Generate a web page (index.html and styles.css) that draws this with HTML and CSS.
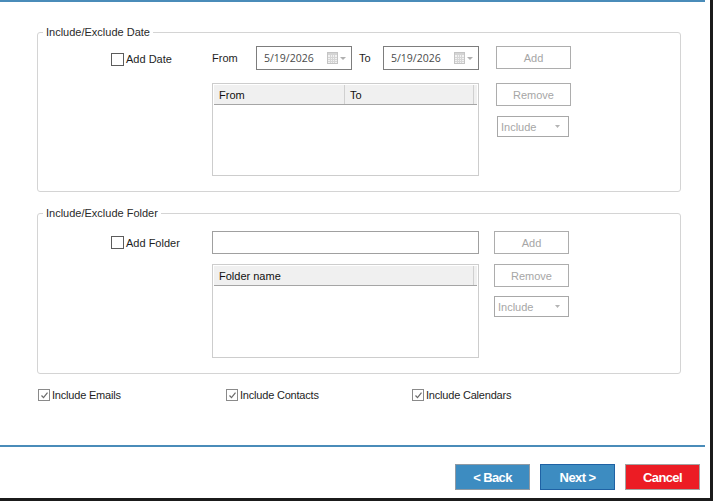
FILE: index.html
```html
<!DOCTYPE html>
<html>
<head>
<meta charset="utf-8">
<link rel="stylesheet" href="styles.css">
</head>
<body>
<div class="window">
  <div class="topline"></div>

  <fieldset class="group group-date">
    <legend>Include/Exclude Date</legend>
    <div class="grid">
      <label class="chk"><span class="box"></span>Add Date</label>
      <div class="daterow">
        <span class="lbl from">From</span>
        <div class="picker">
          <span class="val">5/19/2026</span>
          <svg class="cal" width="20" height="12" viewBox="0 0 20 12">
            <rect x="0.5" y="0.5" width="10" height="11" fill="#f2f2f2" stroke="#c4c4c4"/>
            <rect x="1" y="1" width="9" height="2" fill="#d4d4d4"/>
            <path d="M1 5.5h9M1 7.5h9M1 9.5h9M3.5 3v8M5.5 3v8M7.5 3v8" stroke="#d6d6d6" stroke-width="1"/>
            <path d="M13 5h6l-3 3z" fill="#b0b0b0"/>
          </svg>
        </div>
        <span class="lbl to">To</span>
        <div class="picker">
          <span class="val">5/19/2026</span>
          <svg class="cal" width="20" height="12" viewBox="0 0 20 12">
            <rect x="0.5" y="0.5" width="10" height="11" fill="#f2f2f2" stroke="#c4c4c4"/>
            <rect x="1" y="1" width="9" height="2" fill="#d4d4d4"/>
            <path d="M1 5.5h9M1 7.5h9M1 9.5h9M3.5 3v8M5.5 3v8M7.5 3v8" stroke="#d6d6d6" stroke-width="1"/>
            <path d="M13 5h6l-3 3z" fill="#b0b0b0"/>
          </svg>
        </div>
      </div>
      <button class="btn add">Add</button>
      <div class="list">
        <div class="lhead">
          <span class="col c-from">From</span>
          <span class="col c-to">To</span>
        </div>
      </div>
      <div class="side">
        <button class="btn">Remove</button>
        <div class="combo combo-date"><span>Include</span><svg width="5" height="3" viewBox="0 0 5 3"><path d="M0 0h5l-2.5 3z" fill="#b4b4b4"/></svg></div>
      </div>
    </div>
  </fieldset>

  <fieldset class="group group-folder">
    <legend>Include/Exclude Folder</legend>
    <div class="grid">
      <label class="chk"><span class="box"></span>Add Folder</label>
      <div class="textbox"></div>
      <button class="btn add">Add</button>
      <div class="list list2">
        <div class="lhead">
          <span class="col c-folder">Folder name</span>
        </div>
      </div>
      <div class="side">
        <button class="btn">Remove</button>
        <div class="combo"><span>Include</span><svg width="5" height="3" viewBox="0 0 5 3"><path d="M0 0h5l-2.5 3z" fill="#b4b4b4"/></svg></div>
      </div>
    </div>
  </fieldset>

  <div class="includes">
    <label class="inc w1"><span class="cbox"><svg width="9" height="9" viewBox="0 0 9 9"><path d="M1.5 4.5l2 2.2 4-5" fill="none" stroke="#6a6a6a" stroke-width="1.2"/></svg></span>Include Emails</label>
    <label class="inc w2"><span class="cbox"><svg width="9" height="9" viewBox="0 0 9 9"><path d="M1.5 4.5l2 2.2 4-5" fill="none" stroke="#6a6a6a" stroke-width="1.2"/></svg></span>Include Contacts</label>
    <label class="inc"><span class="cbox"><svg width="9" height="9" viewBox="0 0 9 9"><path d="M1.5 4.5l2 2.2 4-5" fill="none" stroke="#6a6a6a" stroke-width="1.2"/></svg></span>Include Calendars</label>
  </div>

  <footer class="footer">
    <div class="botline"></div>
    <div class="actions">
      <button class="nav back">&lt; Back</button>
      <button class="nav next">Next &gt;</button>
      <button class="nav cancel">Cancel</button>
    </div>
  </footer>
</div>
</body>
</html>
```

FILE: styles.css
```css
* { box-sizing: border-box; }
html, body { margin: 0; padding: 0; background: #fff; }
body {
  font-family: "Liberation Sans", Arial, sans-serif;
  font-size: 11px;
  color: #1a1a1a;
}
.window {
  width: 713px;
  height: 501px;
  border-right: 3px solid #1b1b1b;
  border-bottom: 3px solid #1b1b1b;
  display: flex;
  flex-direction: column;
  background: #fff;
  overflow: hidden;
}
.topline {
  width: 705px;
  height: 2px;
  background: #4a8cb9;
  flex: none;
}
.group {
  margin: 0 0 0 37px;
  width: 644px;
  padding: 0;
  border: 1px solid #d4d4d4;
  border-radius: 3px;
  min-inline-size: 0;
  flex: none;
}
.group legend {
  margin-left: 5px;
  padding: 0 3px;
  font-size: 11px;
  line-height: 13px;
  color: #2a2a2a;
}
.group-date { margin-top: 24px; }
.group-folder { margin-top: 15px; }

.grid {
  display: grid;
  padding-left: 73px;
  align-items: start;
}
.group-date .grid {
  grid-template-columns: 101px 267px 17px 75px;
  grid-template-rows: 24px auto;
  row-gap: 13px;
  padding-top: 7px;
  padding-bottom: 15px;
}
.group-folder .grid {
  grid-template-columns: 101px 267px 15px 75px;
  grid-template-rows: 23px auto;
  row-gap: 10px;
  padding-top: 11px;
  padding-bottom: 15px;
}
.chk {
  grid-column: 1;
  grid-row: 1;
  align-self: center;
  display: flex;
  align-items: center;
  color: #1e1e1e;
  font-size: 11px;
}
.group-date .chk { margin-top: 2px; }
.box {
  width: 13px;
  height: 13px;
  border: 1px solid #5c5c5c;
  background: #fff;
  margin-right: 2px;
  flex: none;
}
.daterow {
  grid-column: 2;
  grid-row: 1;
  display: flex;
  align-items: center;
  height: 24px;
}
.lbl { color: #1e1e1e; }
.lbl.from { width: 44px; }
.lbl.to { width: 24px; margin-left: 7px; }
.picker {
  width: 96px;
  height: 24px;
  border: 1px solid #7d7d7d;
  display: flex;
  align-items: center;
  padding-left: 7px;
  padding-right: 4px;
  justify-content: space-between;
  color: #4a4a4a;
  font-family: "Open Sans", "Noto Sans", sans-serif;
  font-size: 10.5px;
}
.btn {
  font-family: "Liberation Sans", Arial, sans-serif;
  font-size: 11px;
  color: #a6a6a6;
  background: #fff;
  border: 1px solid #adadad;
  width: 75px;
  height: 23px;
  padding: 0;
}
.btn.add {
  grid-column: 4;
  grid-row: 1;
}
.list {
  grid-column: 2;
  grid-row: 2;
  height: 93px;
  border: 1px solid #cdcdcd;
  padding: 1px;
}
.list2 { height: 94px; }
.lhead {
  height: 20px;
  background: #f0f0f0;
  border-bottom: 1px solid #a5a5a5;
  display: flex;
  align-items: center;
  padding-right: 3px;
}
.col {
  height: 100%;
  display: flex;
  align-items: center;
  padding-left: 5px;
  color: #111;
}
.c-from { width: 131px; border-right: 1px solid #d0d0d0; }
.c-to { flex: 1; border-right: 1px solid #d0d0d0; }
.c-folder { flex: 1; border-right: 1px solid #d0d0d0; }
.side {
  grid-column: 4;
  grid-row: 2;
  display: flex;
  flex-direction: column;
}
.group-date .side { gap: 10px; }
.group-folder .side { gap: 9px; }
.combo {
  width: 75px;
  height: 21px;
  border: 1px solid #a8a8a8;
  display: flex;
  align-items: center;
  justify-content: space-between;
  padding: 0 8px 0 3px;
  color: #a6a6a6;
}
.combo-date { width: 72px; margin-left: 1px; }
.textbox {
  grid-column: 2;
  grid-row: 1;
  height: 23px;
  border: 1px solid #a0a0a0;
}

.includes {
  display: flex;
  padding-left: 38px;
  margin-top: 15px;
  flex: none;
}
.inc {
  display: flex;
  align-items: center;
  color: #1e1e1e;
  font-size: 11px;
  letter-spacing: -0.2px;
}
.inc.w1 { width: 188px; }
.inc.w2 { width: 186px; }
.cbox {
  width: 12px;
  height: 12px;
  border: 1px solid #8a8a8a;
  margin-right: 2px;
  display: flex;
  align-items: center;
  justify-content: center;
  flex: none;
}

.footer {
  margin-top: auto;
  flex: none;
  height: 53px;
}
.botline {
  width: 705px;
  height: 2px;
  background: #4a8cb9;
}
.actions {
  display: flex;
  justify-content: flex-end;
  gap: 10px;
  padding: 17px 10px 0 0;
}
.nav {
  width: 75px;
  height: 26px;
  padding: 0;
  font-family: "Liberation Sans", Arial, sans-serif;
  font-weight: bold;
  font-size: 13px;
  letter-spacing: -0.6px;
  color: #fff;
  border: 1px solid #8f9aa4;
  background: #3d8cc1;
}
.nav.next { border-color: #1f62a4; }
.nav.cancel { background: #ec1c24; border-color: #a3a3a3; }
```
